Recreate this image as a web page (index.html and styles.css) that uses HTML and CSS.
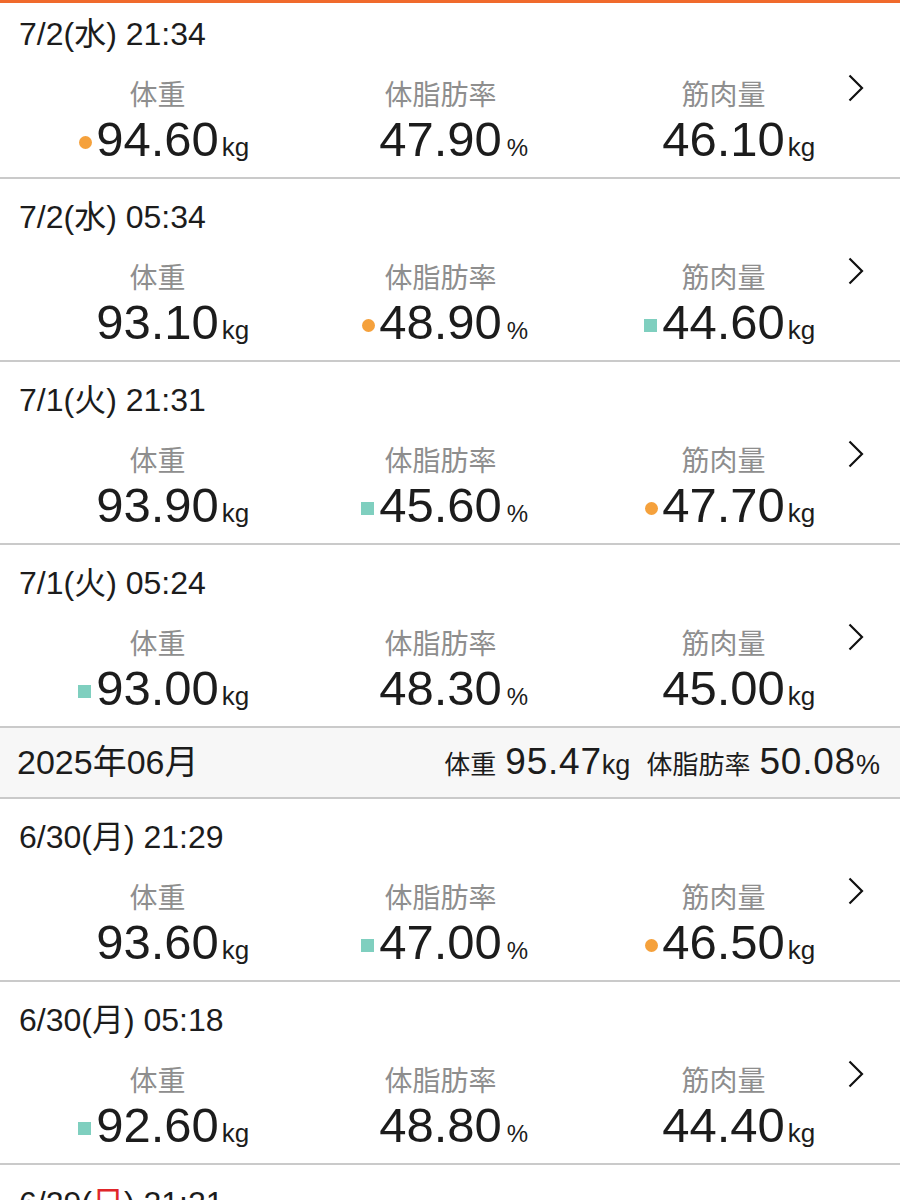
FILE: index.html
```html
<!DOCTYPE html>
<html lang="ja">
<head>
    <meta charset="UTF-8">
    <meta name="viewport" content="width=device-width, initial-scale=1.0">
    <title>測定履歴</title>
    <link rel="stylesheet" href="styles.css">
</head>
<body>

    <div class="topbar"></div>

    <div class="record first">
        <div class="date">7/2(水) 21:34</div>
        <div class="metrics">
            <div class="metric">
                <div class="label">体重</div>
                <div class="value"><span class="mark"><i class="dot"></i></span><span class="num">94.60</span><span class="unit">kg</span></div>
            </div>
            <div class="metric">
                <div class="label">体脂肪率</div>
                <div class="value"><span class="mark"></span><span class="num">47.90</span><span class="unit pct">%</span></div>
            </div>
            <div class="metric">
                <div class="label">筋肉量</div>
                <div class="value"><span class="mark"></span><span class="num">46.10</span><span class="unit">kg</span></div>
            </div>
            <svg class="chev" viewBox="0 0 16 28"><polyline points="1.5,1.5 14,14 1.5,26.5"/></svg>
        </div>
    </div>

    <div class="record">
        <div class="date">7/2(水) 05:34</div>
        <div class="metrics">
            <div class="metric">
                <div class="label">体重</div>
                <div class="value"><span class="mark"></span><span class="num">93.10</span><span class="unit">kg</span></div>
            </div>
            <div class="metric">
                <div class="label">体脂肪率</div>
                <div class="value"><span class="mark"><i class="dot"></i></span><span class="num">48.90</span><span class="unit pct">%</span></div>
            </div>
            <div class="metric">
                <div class="label">筋肉量</div>
                <div class="value"><span class="mark"><i class="sq"></i></span><span class="num">44.60</span><span class="unit">kg</span></div>
            </div>
            <svg class="chev" viewBox="0 0 16 28"><polyline points="1.5,1.5 14,14 1.5,26.5"/></svg>
        </div>
    </div>

    <div class="record">
        <div class="date">7/1(火) 21:31</div>
        <div class="metrics">
            <div class="metric">
                <div class="label">体重</div>
                <div class="value"><span class="mark"></span><span class="num">93.90</span><span class="unit">kg</span></div>
            </div>
            <div class="metric">
                <div class="label">体脂肪率</div>
                <div class="value"><span class="mark"><i class="sq"></i></span><span class="num">45.60</span><span class="unit pct">%</span></div>
            </div>
            <div class="metric">
                <div class="label">筋肉量</div>
                <div class="value"><span class="mark"><i class="dot"></i></span><span class="num">47.70</span><span class="unit">kg</span></div>
            </div>
            <svg class="chev" viewBox="0 0 16 28"><polyline points="1.5,1.5 14,14 1.5,26.5"/></svg>
        </div>
    </div>

    <div class="record">
        <div class="date">7/1(火) 05:24</div>
        <div class="metrics">
            <div class="metric">
                <div class="label">体重</div>
                <div class="value"><span class="mark"><i class="sq"></i></span><span class="num">93.00</span><span class="unit">kg</span></div>
            </div>
            <div class="metric">
                <div class="label">体脂肪率</div>
                <div class="value"><span class="mark"></span><span class="num">48.30</span><span class="unit pct">%</span></div>
            </div>
            <div class="metric">
                <div class="label">筋肉量</div>
                <div class="value"><span class="mark"></span><span class="num">45.00</span><span class="unit">kg</span></div>
            </div>
            <svg class="chev" viewBox="0 0 16 28"><polyline points="1.5,1.5 14,14 1.5,26.5"/></svg>
        </div>
    </div>

    <div class="month">
        <div class="month-title">2025年06月</div>
        <div class="summary">
            <span class="sum-label">体重</span><span class="sum-num">95.47</span><span class="sum-unit">kg</span>
            <span class="sum-label second">体脂肪率</span><span class="sum-num">50.08</span><span class="sum-unit">%</span>
        </div>
    </div>

    <div class="record">
        <div class="date">6/30(月) 21:29</div>
        <div class="metrics">
            <div class="metric">
                <div class="label">体重</div>
                <div class="value"><span class="mark"></span><span class="num">93.60</span><span class="unit">kg</span></div>
            </div>
            <div class="metric">
                <div class="label">体脂肪率</div>
                <div class="value"><span class="mark"><i class="sq"></i></span><span class="num">47.00</span><span class="unit pct">%</span></div>
            </div>
            <div class="metric">
                <div class="label">筋肉量</div>
                <div class="value"><span class="mark"><i class="dot"></i></span><span class="num">46.50</span><span class="unit">kg</span></div>
            </div>
            <svg class="chev" viewBox="0 0 16 28"><polyline points="1.5,1.5 14,14 1.5,26.5"/></svg>
        </div>
    </div>

    <div class="record">
        <div class="date">6/30(月) 05:18</div>
        <div class="metrics">
            <div class="metric">
                <div class="label">体重</div>
                <div class="value"><span class="mark"><i class="sq"></i></span><span class="num">92.60</span><span class="unit">kg</span></div>
            </div>
            <div class="metric">
                <div class="label">体脂肪率</div>
                <div class="value"><span class="mark"></span><span class="num">48.80</span><span class="unit pct">%</span></div>
            </div>
            <div class="metric">
                <div class="label">筋肉量</div>
                <div class="value"><span class="mark"></span><span class="num">44.40</span><span class="unit">kg</span></div>
            </div>
            <svg class="chev" viewBox="0 0 16 28"><polyline points="1.5,1.5 14,14 1.5,26.5"/></svg>
        </div>
    </div>

    <div class="record">
        <div class="date">6/29(<span class="sun">日</span>) 21:21</div>
    </div>

</body>
</html>
```

FILE: styles.css
```css
body {
    margin: 0;
    font-family: "Liberation Sans", "Noto Sans CJK JP", sans-serif;
    color: #1c1c1c;
    background-color: #fff;
    overflow: hidden;
}

.topbar {
    height: 3px;
    background-color: #f06a2c;
}

.record {
    padding: 23px 0 14px;
    border-bottom: 2px solid #cacaca;
}

.record.first {
    padding-top: 16px;
}

.date {
    font-size: 32px;
    line-height: 30px;
    padding-left: 19px;
    margin-bottom: 33px;
}

.sun {
    color: #e0262a;
}

.metrics {
    position: relative;
    display: grid;
    grid-template-columns: repeat(3, 283px);
    padding-left: 16px;
}

.label {
    font-size: 28px;
    line-height: 28px;
    color: #8e8e8e;
    text-align: center;
    margin-bottom: 6px;
}

.value {
    display: grid;
    grid-template-columns: 1fr auto 1fr;
    align-items: baseline;
}

.mark {
    text-align: right;
}

.num {
    font-size: 49px;
    line-height: 47px;
}

.unit {
    font-size: 26px;
    margin-left: 3px;
}

.unit.pct {
    font-size: 24px;
    margin-left: 5px;
}

.dot, .sq {
    display: inline-block;
    width: 13px;
    height: 13px;
    margin-bottom: 7px;
}

.dot {
    background-color: #f5a13c;
    border-radius: 50%;
    margin-right: 4px;
}

.sq {
    background-color: #7fcfbf;
    margin-right: 5px;
}

.chev {
    position: absolute;
    right: 36px;
    top: -8px;
    width: 16px;
    height: 28px;
    fill: none;
    stroke: #111;
    stroke-width: 2.2;
}

.month {
    display: flex;
    justify-content: space-between;
    align-items: baseline;
    box-sizing: border-box;
    height: 71px;
    padding: 16px 20px 0 17px;
    background-color: #f7f7f7;
    border-bottom: 2px solid #cacaca;
}

.month-title {
    font-size: 34px;
    line-height: 32px;
}

.summary {
    display: flex;
    align-items: baseline;
}

.sum-label {
    font-size: 26px;
    margin-right: 9px;
}

.sum-label.second {
    margin-left: 16px;
}

.sum-num {
    font-size: 37px;
    line-height: 36px;
    letter-spacing: 0.8px;
}

.sum-unit {
    font-size: 27px;
}
```
